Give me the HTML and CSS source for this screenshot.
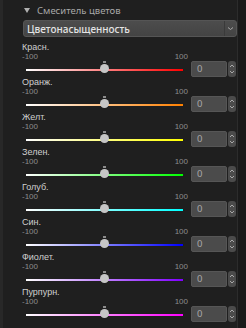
FILE: index.html
```html
<!DOCTYPE html>
<html lang="ru">
<head>
    <meta charset="UTF-8">
    <title>Смеситель цветов</title>
    <link rel="stylesheet" href="styles.css">
</head>
<body>
<div class="panel">
    <div class="main">
        <div class="head"><span class="tri"></span><span>Смеситель цветов</span></div>
        <div class="select">
            <span class="select-text">Цветонасыщенность</span>
            <span class="select-arrow"><svg width="7" height="5" viewBox="0 0 7 5"><path d="M1 1.5 L3.5 3.5 L6 1.5" fill="none" stroke="#aaa" stroke-width="1"/></svg></span>
        </div>
        <ul class="rows">
            <li class="row red"><div class="name">Красн.</div><div class="range"><span>-100</span><span>100</span></div><div class="slider"><i class="track"></i><b class="thumb"></b></div><div class="num">0</div><div class="spin"><svg width="6" height="12" viewBox="0 0 6 12"><path d="M1 4 L3 2 L5 4 M1 8 L3 10 L5 8" fill="none" stroke="#a8a8a8" stroke-width="1"/></svg></div></li>
            <li class="row orange"><div class="name">Оранж.</div><div class="range"><span>-100</span><span>100</span></div><div class="slider"><i class="track"></i><b class="thumb"></b></div><div class="num">0</div><div class="spin"><svg width="6" height="12" viewBox="0 0 6 12"><path d="M1 4 L3 2 L5 4 M1 8 L3 10 L5 8" fill="none" stroke="#a8a8a8" stroke-width="1"/></svg></div></li>
            <li class="row yellow"><div class="name">Желт.</div><div class="range"><span>-100</span><span>100</span></div><div class="slider"><i class="track"></i><b class="thumb"></b></div><div class="num">0</div><div class="spin"><svg width="6" height="12" viewBox="0 0 6 12"><path d="M1 4 L3 2 L5 4 M1 8 L3 10 L5 8" fill="none" stroke="#a8a8a8" stroke-width="1"/></svg></div></li>
            <li class="row green"><div class="name">Зелен.</div><div class="range"><span>-100</span><span>100</span></div><div class="slider"><i class="track"></i><b class="thumb"></b></div><div class="num">0</div><div class="spin"><svg width="6" height="12" viewBox="0 0 6 12"><path d="M1 4 L3 2 L5 4 M1 8 L3 10 L5 8" fill="none" stroke="#a8a8a8" stroke-width="1"/></svg></div></li>
            <li class="row cyan"><div class="name">Голуб.</div><div class="range"><span>-100</span><span>100</span></div><div class="slider"><i class="track"></i><b class="thumb"></b></div><div class="num">0</div><div class="spin"><svg width="6" height="12" viewBox="0 0 6 12"><path d="M1 4 L3 2 L5 4 M1 8 L3 10 L5 8" fill="none" stroke="#a8a8a8" stroke-width="1"/></svg></div></li>
            <li class="row blue"><div class="name">Син.</div><div class="range"><span>-100</span><span>100</span></div><div class="slider"><i class="track"></i><b class="thumb"></b></div><div class="num">0</div><div class="spin"><svg width="6" height="12" viewBox="0 0 6 12"><path d="M1 4 L3 2 L5 4 M1 8 L3 10 L5 8" fill="none" stroke="#a8a8a8" stroke-width="1"/></svg></div></li>
            <li class="row violet"><div class="name">Фиолет.</div><div class="range"><span>-100</span><span>100</span></div><div class="slider"><i class="track"></i><b class="thumb"></b></div><div class="num">0</div><div class="spin"><svg width="6" height="12" viewBox="0 0 6 12"><path d="M1 4 L3 2 L5 4 M1 8 L3 10 L5 8" fill="none" stroke="#a8a8a8" stroke-width="1"/></svg></div></li>
            <li class="row magenta"><div class="name">Пурпурн.</div><div class="range"><span>-100</span><span>100</span></div><div class="slider"><i class="track"></i><b class="thumb"></b></div><div class="num">0</div><div class="spin"><svg width="6" height="12" viewBox="0 0 6 12"><path d="M1 4 L3 2 L5 4 M1 8 L3 10 L5 8" fill="none" stroke="#a8a8a8" stroke-width="1"/></svg></div></li>
        </ul>
    </div>
    <div class="scroll"></div>
</div>
</body>
</html>
```
FILE: styles.css
```css
*{
    margin:0;
    padding:0;
    box-sizing:border-box;
}
ul{
    list-style:none;
}
body{
    background:#1f1f1f;
    font-family:"Noto Sans","Open Sans",sans-serif;
    color:#c8c8c8;
}
.panel{
    display:flex;
    height:328px;
    border-left:3px solid #282828;
}
.main{
    width:235px;
    padding-left:19px;
    border-right:1px solid #2c2c2c;
}
.scroll{
    flex:1;
    background:#1a1a1a;
}
.head{
    height:20px;
    display:flex;
    align-items:center;
    padding-left:2px;
    font-size:9.5px;
    color:#a8a8a8;
}
.tri{
    width:0;
    height:0;
    border-left:3px solid transparent;
    border-right:3px solid transparent;
    border-top:5px solid #b0b0b0;
    margin-right:7px;
}
.select{
    margin-left:1px;
    width:214px;
    height:17px;
    display:flex;
    align-items:center;
    background:linear-gradient(#4c4c4c,#444);
    border:1px solid #555;
    border-radius:3px;
}
.select-text{
    flex:1;
    padding-left:3px;
    font-size:10px;
    font-weight:500;
    color:#e4e4e4;
}
.select-arrow{
    width:12px;
    height:15px;
    display:flex;
    align-items:center;
    justify-content:center;
    border-left:1px solid #3a3a3a;
}
.rows{
    padding-top:5px;
}
.row{
    display:grid;
    grid-template-columns:166px 38px 8px;
    grid-template-rows:10px 9px 16px;
    column-gap:1px;
}
.name,.range{
    font-family:"Liberation Sans",Arial,sans-serif;
}
.name{
    grid-column:1 / 4;
    font-size:9px;
    line-height:10px;
    color:#cfcfcf;
}
.range{
    grid-column:1;
    display:flex;
    justify-content:space-between;
    font-size:8px;
    line-height:9px;
    color:#8e8e8e;
}
.slider{
    grid-column:1;
    position:relative;
    display:flex;
    align-items:center;
    padding:0 5px 0 4px;
}
.track{
    display:block;
    width:100%;
    height:2px;
    margin-top:1px;
}
.thumb{
    position:absolute;
    left:78px;
    top:3px;
    width:9px;
    height:9px;
    border-radius:50%;
    background:#c6c6c6;
}
.thumb:before{
    content:"";
    position:absolute;
    left:3px;
    top:-3px;
    width:3px;
    height:2px;
    background:#8a8a8a;
}
.num{
    grid-column:2;
    margin-left:2px;
    background:#4b4b4b;
    border:1px solid #565656;
    border-radius:2px;
    font-size:9.5px;
    line-height:14px;
    padding-left:5px;
    color:#a8a8a8;
}
.spin{
    grid-column:3;
    background:#4b4b4b;
    border-radius:3px;
    display:flex;
    align-items:center;
    justify-content:center;
}
.red .track{background:linear-gradient(to right,#fff,#ff0000);}
.orange .track{background:linear-gradient(to right,#fff,#ff8000);}
.yellow .track{background:linear-gradient(to right,#fff,#ffff00);}
.green .track{background:linear-gradient(to right,#fff,#00ff00);}
.cyan .track{background:linear-gradient(to right,#fff,#00ffff);}
.blue .track{background:linear-gradient(to right,#fff,#0000ff);}
.violet .track{background:linear-gradient(to right,#fff,#8000ff);}
.magenta .track{background:linear-gradient(to right,#fff,#ff00ff);}
```
